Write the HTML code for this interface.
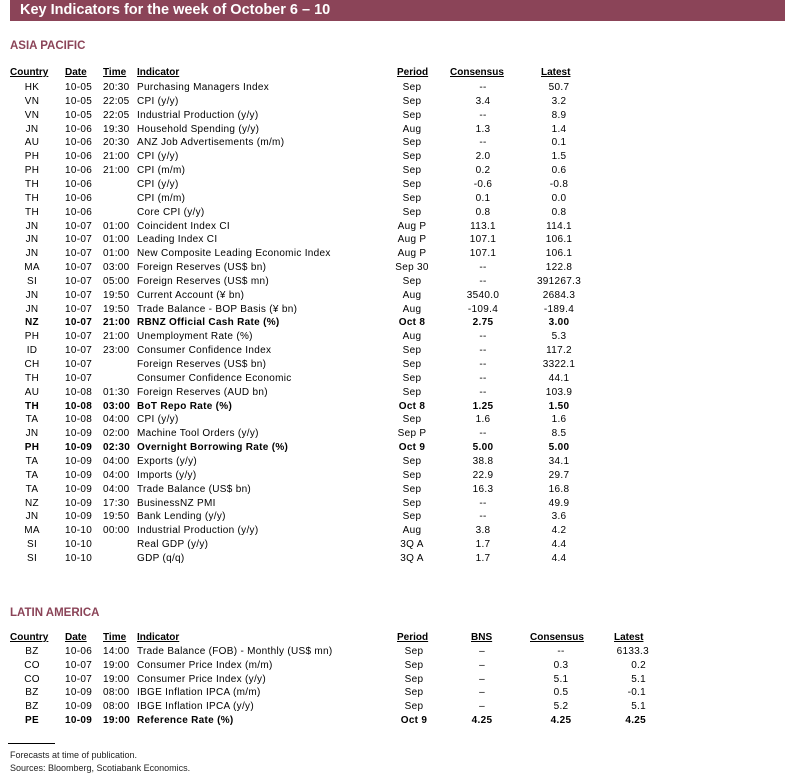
<!DOCTYPE html>
<html><head><meta charset="utf-8"><style>
body{margin:0;width:785px;height:780px;background:#fff;font-family:"Liberation Sans",Arial,sans-serif;color:#000;position:relative;overflow:hidden}
.bar{position:absolute;left:10px;top:0;width:775px;height:21px;background:#8b4458;color:#fff;font-size:14.5px;font-weight:bold;line-height:21px;padding-left:10px;box-sizing:border-box}
.sec{position:absolute;left:10px;color:#8b4458;font-weight:bold;font-size:11.5px}
.r{position:absolute;left:0;width:785px;height:14px;font-size:10px;line-height:14px;letter-spacing:0.3px;white-space:nowrap}
.r span{position:absolute;top:0}
.c{transform:translateX(-50%)}
.rt{transform:translateX(-100%)}
.b{font-weight:bold}
.h span{text-decoration:underline;font-weight:bold;letter-spacing:0}
.foot{position:absolute;left:10px;font-size:9px;color:#222}
</style></head><body>
<div class="bar">Key Indicators for the week of October 6 – 10</div>
<div class="sec" style="top:40px">ASIA PACIFIC</div>
<div class="sec" style="top:607px">LATIN AMERICA</div>
<div style="position:absolute;left:8px;top:743px;width:47px;border-top:1px solid #000"></div>
<div class="foot" style="top:750px">Forecasts at time of publication.</div>
<div class="foot" style="top:763px">Sources: Bloomberg, Scotiabank Economics.</div>

<div class="r h" style="top:66px"><span style="left:10px">Country</span><span style="left:65px">Date</span><span style="left:103px">Time</span><span style="left:137px">Indicator</span><span style="left:397px">Period</span><span style="left:450px">Consensus</span><span style="left:541px">Latest</span></div>

<div class="r" style="top:81px"><span class="c" style="left:32px">HK</span><span style="left:65px">10-05</span><span style="left:103px">20:30</span><span style="left:137px">Purchasing Managers Index</span><span class="c" style="left:412px">Sep</span><span class="c" style="left:483px">--</span><span class="c" style="left:559px">50.7</span></div>
<div class="r" style="top:94.85px"><span class="c" style="left:32px">VN</span><span style="left:65px">10-05</span><span style="left:103px">22:05</span><span style="left:137px">CPI (y/y)</span><span class="c" style="left:412px">Sep</span><span class="c" style="left:483px">3.4</span><span class="c" style="left:559px">3.2</span></div>
<div class="r" style="top:108.7px"><span class="c" style="left:32px">VN</span><span style="left:65px">10-05</span><span style="left:103px">22:05</span><span style="left:137px">Industrial Production (y/y)</span><span class="c" style="left:412px">Sep</span><span class="c" style="left:483px">--</span><span class="c" style="left:559px">8.9</span></div>
<div class="r" style="top:122.55px"><span class="c" style="left:32px">JN</span><span style="left:65px">10-06</span><span style="left:103px">19:30</span><span style="left:137px">Household Spending (y/y)</span><span class="c" style="left:412px">Aug</span><span class="c" style="left:483px">1.3</span><span class="c" style="left:559px">1.4</span></div>
<div class="r" style="top:136.4px"><span class="c" style="left:32px">AU</span><span style="left:65px">10-06</span><span style="left:103px">20:30</span><span style="left:137px">ANZ Job Advertisements (m/m)</span><span class="c" style="left:412px">Sep</span><span class="c" style="left:483px">--</span><span class="c" style="left:559px">0.1</span></div>
<div class="r" style="top:150.25px"><span class="c" style="left:32px">PH</span><span style="left:65px">10-06</span><span style="left:103px">21:00</span><span style="left:137px">CPI (y/y)</span><span class="c" style="left:412px">Sep</span><span class="c" style="left:483px">2.0</span><span class="c" style="left:559px">1.5</span></div>
<div class="r" style="top:164.1px"><span class="c" style="left:32px">PH</span><span style="left:65px">10-06</span><span style="left:103px">21:00</span><span style="left:137px">CPI (m/m)</span><span class="c" style="left:412px">Sep</span><span class="c" style="left:483px">0.2</span><span class="c" style="left:559px">0.6</span></div>
<div class="r" style="top:177.95px"><span class="c" style="left:32px">TH</span><span style="left:65px">10-06</span><span style="left:137px">CPI (y/y)</span><span class="c" style="left:412px">Sep</span><span class="c" style="left:483px">-0.6</span><span class="c" style="left:559px">-0.8</span></div>
<div class="r" style="top:191.8px"><span class="c" style="left:32px">TH</span><span style="left:65px">10-06</span><span style="left:137px">CPI (m/m)</span><span class="c" style="left:412px">Sep</span><span class="c" style="left:483px">0.1</span><span class="c" style="left:559px">0.0</span></div>
<div class="r" style="top:205.65px"><span class="c" style="left:32px">TH</span><span style="left:65px">10-06</span><span style="left:137px">Core CPI (y/y)</span><span class="c" style="left:412px">Sep</span><span class="c" style="left:483px">0.8</span><span class="c" style="left:559px">0.8</span></div>
<div class="r" style="top:219.5px"><span class="c" style="left:32px">JN</span><span style="left:65px">10-07</span><span style="left:103px">01:00</span><span style="left:137px">Coincident Index CI</span><span class="c" style="left:412px">Aug P</span><span class="c" style="left:483px">113.1</span><span class="c" style="left:559px">114.1</span></div>
<div class="r" style="top:233.35px"><span class="c" style="left:32px">JN</span><span style="left:65px">10-07</span><span style="left:103px">01:00</span><span style="left:137px">Leading Index CI</span><span class="c" style="left:412px">Aug P</span><span class="c" style="left:483px">107.1</span><span class="c" style="left:559px">106.1</span></div>
<div class="r" style="top:247.2px"><span class="c" style="left:32px">JN</span><span style="left:65px">10-07</span><span style="left:103px">01:00</span><span style="left:137px">New Composite Leading Economic Index</span><span class="c" style="left:412px">Aug P</span><span class="c" style="left:483px">107.1</span><span class="c" style="left:559px">106.1</span></div>
<div class="r" style="top:261.05px"><span class="c" style="left:32px">MA</span><span style="left:65px">10-07</span><span style="left:103px">03:00</span><span style="left:137px">Foreign Reserves (US$ bn)</span><span class="c" style="left:412px">Sep 30</span><span class="c" style="left:483px">--</span><span class="c" style="left:559px">122.8</span></div>
<div class="r" style="top:274.9px"><span class="c" style="left:32px">SI</span><span style="left:65px">10-07</span><span style="left:103px">05:00</span><span style="left:137px">Foreign Reserves (US$ mn)</span><span class="c" style="left:412px">Sep</span><span class="c" style="left:483px">--</span><span class="c" style="left:559px">391267.3</span></div>
<div class="r" style="top:288.75px"><span class="c" style="left:32px">JN</span><span style="left:65px">10-07</span><span style="left:103px">19:50</span><span style="left:137px">Current Account (¥ bn)</span><span class="c" style="left:412px">Aug</span><span class="c" style="left:483px">3540.0</span><span class="c" style="left:559px">2684.3</span></div>
<div class="r" style="top:302.6px"><span class="c" style="left:32px">JN</span><span style="left:65px">10-07</span><span style="left:103px">19:50</span><span style="left:137px">Trade Balance - BOP Basis (¥ bn)</span><span class="c" style="left:412px">Aug</span><span class="c" style="left:483px">-109.4</span><span class="c" style="left:559px">-189.4</span></div>
<div class="r b" style="top:316.45px"><span class="c" style="left:32px">NZ</span><span style="left:65px">10-07</span><span style="left:103px">21:00</span><span style="left:137px">RBNZ Official Cash Rate (%)</span><span class="c" style="left:412px">Oct 8</span><span class="c" style="left:483px">2.75</span><span class="c" style="left:559px">3.00</span></div>
<div class="r" style="top:330.3px"><span class="c" style="left:32px">PH</span><span style="left:65px">10-07</span><span style="left:103px">21:00</span><span style="left:137px">Unemployment Rate (%)</span><span class="c" style="left:412px">Aug</span><span class="c" style="left:483px">--</span><span class="c" style="left:559px">5.3</span></div>
<div class="r" style="top:344.15px"><span class="c" style="left:32px">ID</span><span style="left:65px">10-07</span><span style="left:103px">23:00</span><span style="left:137px">Consumer Confidence Index</span><span class="c" style="left:412px">Sep</span><span class="c" style="left:483px">--</span><span class="c" style="left:559px">117.2</span></div>
<div class="r" style="top:358px"><span class="c" style="left:32px">CH</span><span style="left:65px">10-07</span><span style="left:137px">Foreign Reserves (US$ bn)</span><span class="c" style="left:412px">Sep</span><span class="c" style="left:483px">--</span><span class="c" style="left:559px">3322.1</span></div>
<div class="r" style="top:371.85px"><span class="c" style="left:32px">TH</span><span style="left:65px">10-07</span><span style="left:137px">Consumer Confidence Economic</span><span class="c" style="left:412px">Sep</span><span class="c" style="left:483px">--</span><span class="c" style="left:559px">44.1</span></div>
<div class="r" style="top:385.7px"><span class="c" style="left:32px">AU</span><span style="left:65px">10-08</span><span style="left:103px">01:30</span><span style="left:137px">Foreign Reserves (AUD bn)</span><span class="c" style="left:412px">Sep</span><span class="c" style="left:483px">--</span><span class="c" style="left:559px">103.9</span></div>
<div class="r b" style="top:399.55px"><span class="c" style="left:32px">TH</span><span style="left:65px">10-08</span><span style="left:103px">03:00</span><span style="left:137px">BoT Repo Rate (%)</span><span class="c" style="left:412px">Oct 8</span><span class="c" style="left:483px">1.25</span><span class="c" style="left:559px">1.50</span></div>
<div class="r" style="top:413.4px"><span class="c" style="left:32px">TA</span><span style="left:65px">10-08</span><span style="left:103px">04:00</span><span style="left:137px">CPI (y/y)</span><span class="c" style="left:412px">Sep</span><span class="c" style="left:483px">1.6</span><span class="c" style="left:559px">1.6</span></div>
<div class="r" style="top:427.25px"><span class="c" style="left:32px">JN</span><span style="left:65px">10-09</span><span style="left:103px">02:00</span><span style="left:137px">Machine Tool Orders (y/y)</span><span class="c" style="left:412px">Sep P</span><span class="c" style="left:483px">--</span><span class="c" style="left:559px">8.5</span></div>
<div class="r b" style="top:441.1px"><span class="c" style="left:32px">PH</span><span style="left:65px">10-09</span><span style="left:103px">02:30</span><span style="left:137px">Overnight Borrowing Rate (%)</span><span class="c" style="left:412px">Oct 9</span><span class="c" style="left:483px">5.00</span><span class="c" style="left:559px">5.00</span></div>
<div class="r" style="top:454.95px"><span class="c" style="left:32px">TA</span><span style="left:65px">10-09</span><span style="left:103px">04:00</span><span style="left:137px">Exports (y/y)</span><span class="c" style="left:412px">Sep</span><span class="c" style="left:483px">38.8</span><span class="c" style="left:559px">34.1</span></div>
<div class="r" style="top:468.8px"><span class="c" style="left:32px">TA</span><span style="left:65px">10-09</span><span style="left:103px">04:00</span><span style="left:137px">Imports (y/y)</span><span class="c" style="left:412px">Sep</span><span class="c" style="left:483px">22.9</span><span class="c" style="left:559px">29.7</span></div>
<div class="r" style="top:482.65px"><span class="c" style="left:32px">TA</span><span style="left:65px">10-09</span><span style="left:103px">04:00</span><span style="left:137px">Trade Balance (US$ bn)</span><span class="c" style="left:412px">Sep</span><span class="c" style="left:483px">16.3</span><span class="c" style="left:559px">16.8</span></div>
<div class="r" style="top:496.5px"><span class="c" style="left:32px">NZ</span><span style="left:65px">10-09</span><span style="left:103px">17:30</span><span style="left:137px">BusinessNZ PMI</span><span class="c" style="left:412px">Sep</span><span class="c" style="left:483px">--</span><span class="c" style="left:559px">49.9</span></div>
<div class="r" style="top:510.35px"><span class="c" style="left:32px">JN</span><span style="left:65px">10-09</span><span style="left:103px">19:50</span><span style="left:137px">Bank Lending (y/y)</span><span class="c" style="left:412px">Sep</span><span class="c" style="left:483px">--</span><span class="c" style="left:559px">3.6</span></div>
<div class="r" style="top:524.2px"><span class="c" style="left:32px">MA</span><span style="left:65px">10-10</span><span style="left:103px">00:00</span><span style="left:137px">Industrial Production (y/y)</span><span class="c" style="left:412px">Aug</span><span class="c" style="left:483px">3.8</span><span class="c" style="left:559px">4.2</span></div>
<div class="r" style="top:538.05px"><span class="c" style="left:32px">SI</span><span style="left:65px">10-10</span><span style="left:137px">Real GDP (y/y)</span><span class="c" style="left:412px">3Q A</span><span class="c" style="left:483px">1.7</span><span class="c" style="left:559px">4.4</span></div>
<div class="r" style="top:551.9px"><span class="c" style="left:32px">SI</span><span style="left:65px">10-10</span><span style="left:137px">GDP (q/q)</span><span class="c" style="left:412px">3Q A</span><span class="c" style="left:483px">1.7</span><span class="c" style="left:559px">4.4</span></div>

<div class="r h" style="top:631px"><span style="left:10px">Country</span><span style="left:65px">Date</span><span style="left:103px">Time</span><span style="left:137px">Indicator</span><span style="left:397px">Period</span><span style="left:471px">BNS</span><span style="left:530px">Consensus</span><span style="left:614px">Latest</span></div>
<div class="r" style="top:645px"><span class="c" style="left:32px">BZ</span><span style="left:65px">10-06</span><span style="left:103px">14:00</span><span style="left:137px">Trade Balance (FOB) - Monthly (US$ mn)</span><span class="c" style="left:414px">Sep</span><span class="c" style="left:482px">–</span><span class="c" style="left:561px">--</span><span class="rt" style="left:649px">6133.3</span></div>
<div class="r" style="top:658.8px"><span class="c" style="left:32px">CO</span><span style="left:65px">10-07</span><span style="left:103px">19:00</span><span style="left:137px">Consumer Price Index (m/m)</span><span class="c" style="left:414px">Sep</span><span class="c" style="left:482px">–</span><span class="c" style="left:561px">0.3</span><span class="rt" style="left:646px">0.2</span></div>
<div class="r" style="top:672.6px"><span class="c" style="left:32px">CO</span><span style="left:65px">10-07</span><span style="left:103px">19:00</span><span style="left:137px">Consumer Price Index (y/y)</span><span class="c" style="left:414px">Sep</span><span class="c" style="left:482px">–</span><span class="c" style="left:561px">5.1</span><span class="rt" style="left:646px">5.1</span></div>
<div class="r" style="top:686.4px"><span class="c" style="left:32px">BZ</span><span style="left:65px">10-09</span><span style="left:103px">08:00</span><span style="left:137px">IBGE Inflation IPCA (m/m)</span><span class="c" style="left:414px">Sep</span><span class="c" style="left:482px">–</span><span class="c" style="left:561px">0.5</span><span class="rt" style="left:646px">-0.1</span></div>
<div class="r" style="top:700.2px"><span class="c" style="left:32px">BZ</span><span style="left:65px">10-09</span><span style="left:103px">08:00</span><span style="left:137px">IBGE Inflation IPCA (y/y)</span><span class="c" style="left:414px">Sep</span><span class="c" style="left:482px">–</span><span class="c" style="left:561px">5.2</span><span class="rt" style="left:646px">5.1</span></div>
<div class="r b" style="top:714px"><span class="c" style="left:32px">PE</span><span style="left:65px">10-09</span><span style="left:103px">19:00</span><span style="left:137px">Reference Rate (%)</span><span class="c" style="left:414px">Oct 9</span><span class="c" style="left:482px">4.25</span><span class="c" style="left:561px">4.25</span><span class="rt" style="left:646px">4.25</span></div>
</body></html>
